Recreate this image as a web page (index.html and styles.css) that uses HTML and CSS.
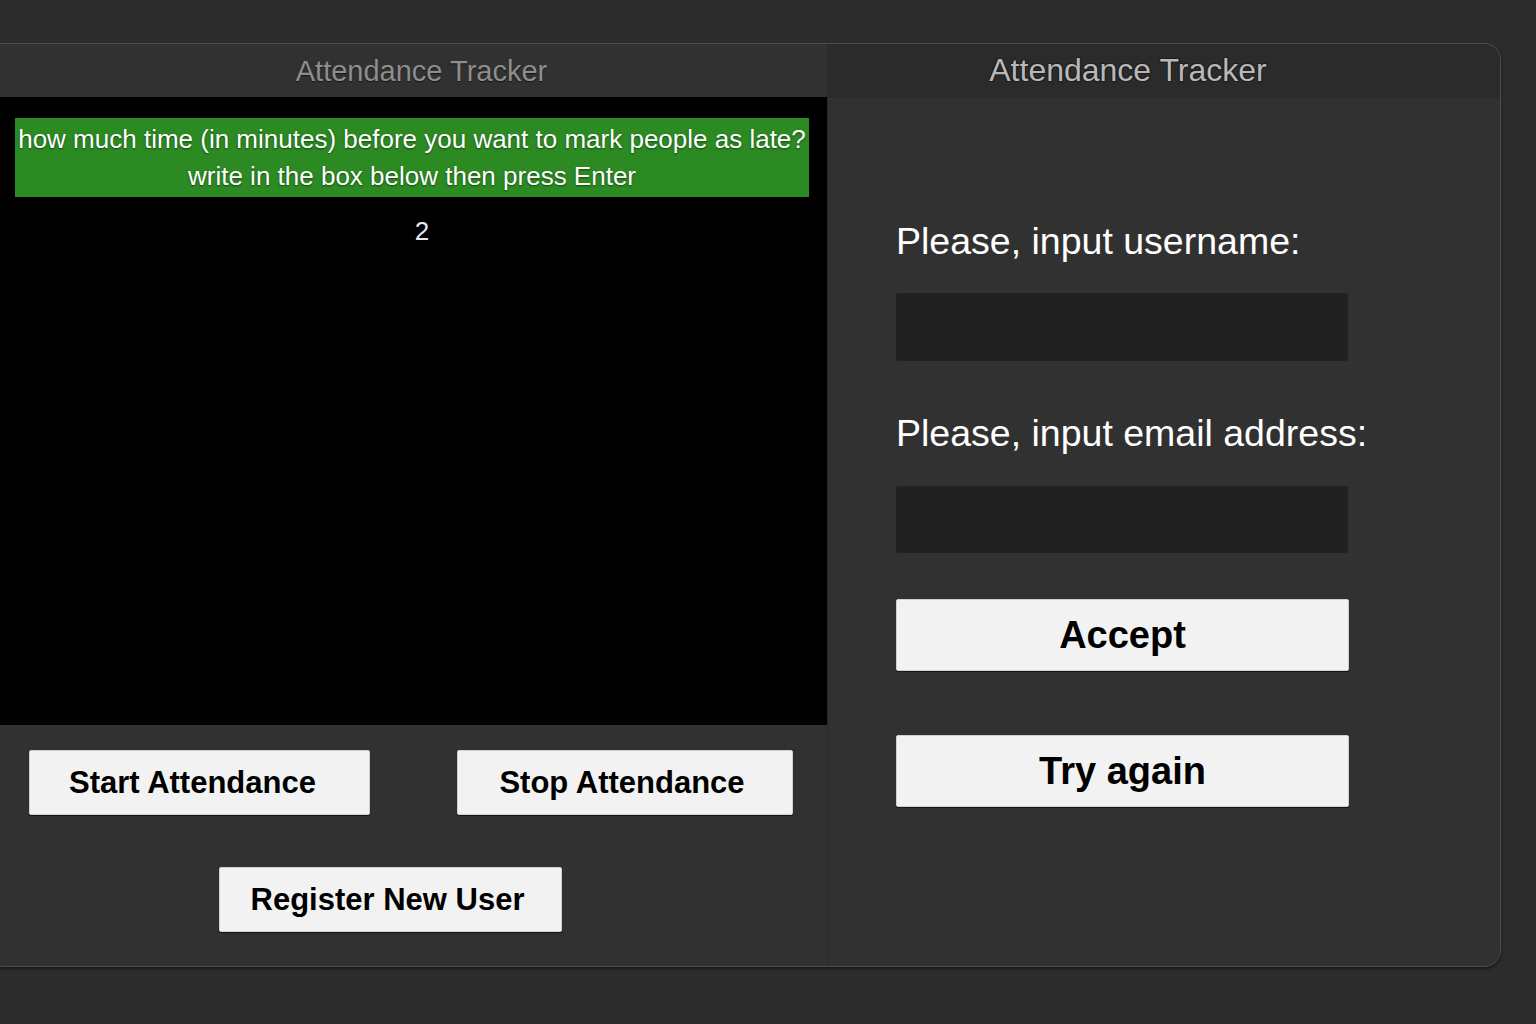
FILE: index.html
```html
<!DOCTYPE html>
<html lang="en">
<head>
<meta charset="utf-8">
<title>Attendance Tracker</title>
<link rel="stylesheet" href="styles.css">
</head>
<body>
<div class="window">
  <section class="pane pane-left">
    <header class="titlebar titlebar-left">Attendance Tracker</header>
    <div class="console">
      <div class="banner">how much time (in minutes) before you want to mark people as late?<br>write in the box below then press Enter</div>
      <div class="entry">2</div>
    </div>
    <div class="controls">
      <div class="row row-top">
        <button class="btn btn-start">Start Attendance</button>
        <button class="btn btn-stop">Stop Attendance</button>
      </div>
      <div class="row row-bottom">
        <button class="btn btn-register">Register New User</button>
      </div>
    </div>
  </section>
  <section class="pane pane-right">
    <header class="titlebar titlebar-right">Attendance Tracker</header>
    <div class="form">
      <label class="label label-user">Please, input username:</label>
      <div class="field field-user"></div>
      <label class="label label-email">Please, input email address:</label>
      <div class="field field-email"></div>
      <button class="btn btn-big btn-accept">Accept</button>
      <button class="btn btn-big btn-retry">Try again</button>
    </div>
  </section>
</div>
</body>
</html>
```
FILE: styles.css
```css
* { box-sizing: border-box; }
html, body { margin: 0; padding: 0; }
body {
  background: #2c2c2c;
  width: 1536px;
  height: 1024px;
  overflow: hidden;
  font-family: "Liberation Sans", Arial, sans-serif;
  padding-top: 43px;
}
.window {
  width: 1501px;
  height: 924px;
  display: flex;
  background: #313131;
  border: 1px solid #4c4c4c;
  border-left: none;
  border-radius: 0 17px 17px 0;
  overflow: hidden;
  box-shadow: 0 2px 3px rgba(0,0,0,0.45);
}
.pane { display: flex; flex-direction: column; }
.pane-left { width: 827px; flex: none; }
.pane-right { flex: 1; border-left: 1px solid #282828; background: #313131; }
.titlebar {
  text-align: center;
  flex: none;
}
.titlebar-left {
  height: 53px;
  background: #313131;
  color: #8e8e8e;
  font-size: 29px;
  line-height: 55px;
  padding-left: 16px;
  text-shadow: 0 1px 1px rgba(0,0,0,0.6);
}
.titlebar-right {
  height: 54px;
  background: #2b2b2b;
  color: #b8b8b8;
  font-size: 32px;
  line-height: 52px;
  padding-right: 72px;
  text-shadow: -1px -1px 0 #1e1e1e, 1px 1px 0 #1e1e1e, 1px -1px 0 #1e1e1e, -1px 1px 0 #1e1e1e;
}
.console {
  height: 628px;
  flex: none;
  background: #000;
  padding: 21px 18px 0 15px;
}
.banner {
  background: #2b8a22;
  color: #fff;
  font-size: 26px;
  line-height: 37px;
  height: 79px;
  padding-top: 3px;
  text-align: center;
  letter-spacing: 0;
  text-shadow: 0 1px 2px rgba(0,0,0,0.5);
}
.entry {
  margin-top: 19px;
  text-align: center;
  color: #e4e8f0;
  font-size: 26px;
  line-height: 30px;
  padding-left: 20px;
}
.controls {
  flex: 1;
  background: #313131;
  padding-top: 25px;
}
.row { display: flex; }
.row-top { padding-left: 29px; gap: 87px; }
.row-bottom { padding-left: 219px; margin-top: 52px; }
.btn {
  font-family: "Liberation Sans", Arial, sans-serif;
  font-weight: bold;
  color: #000;
  background: #f2f2f2;
  border: 1px solid #d0d0d0;
  border-radius: 2px;
  box-shadow: 0 1px 1px rgba(0,0,0,0.6);
  padding: 0;
  text-align: center;
}
.btn-start, .btn-stop, .btn-register { height: 65px; font-size: 31px; }
.btn-start { width: 341px; padding-right: 14px; }
.btn-stop { width: 336px; padding-right: 6px; }
.btn-register { width: 343px; padding-right: 6px; }
.form {
  display: flex;
  flex-direction: column;
  align-items: flex-start;
  padding: 121px 0 0 68px;
}
.label {
  display: block;
  color: #fff;
  font-size: 37.5px;
  line-height: 44px;
  letter-spacing: 0;
  white-space: nowrap;
}
.field {
  width: 452px;
  height: 68px;
  background: #212121;
  border-radius: 3px;
}
.field-user { margin-top: 30px; }
.label-email { margin-top: 50px; }
.field-email { margin-top: 31px; height: 67px; }
.btn-big { width: 453px; height: 72px; font-size: 38px; }
.btn-accept { margin-top: 46px; }
.btn-retry { margin-top: 64px; }
```
